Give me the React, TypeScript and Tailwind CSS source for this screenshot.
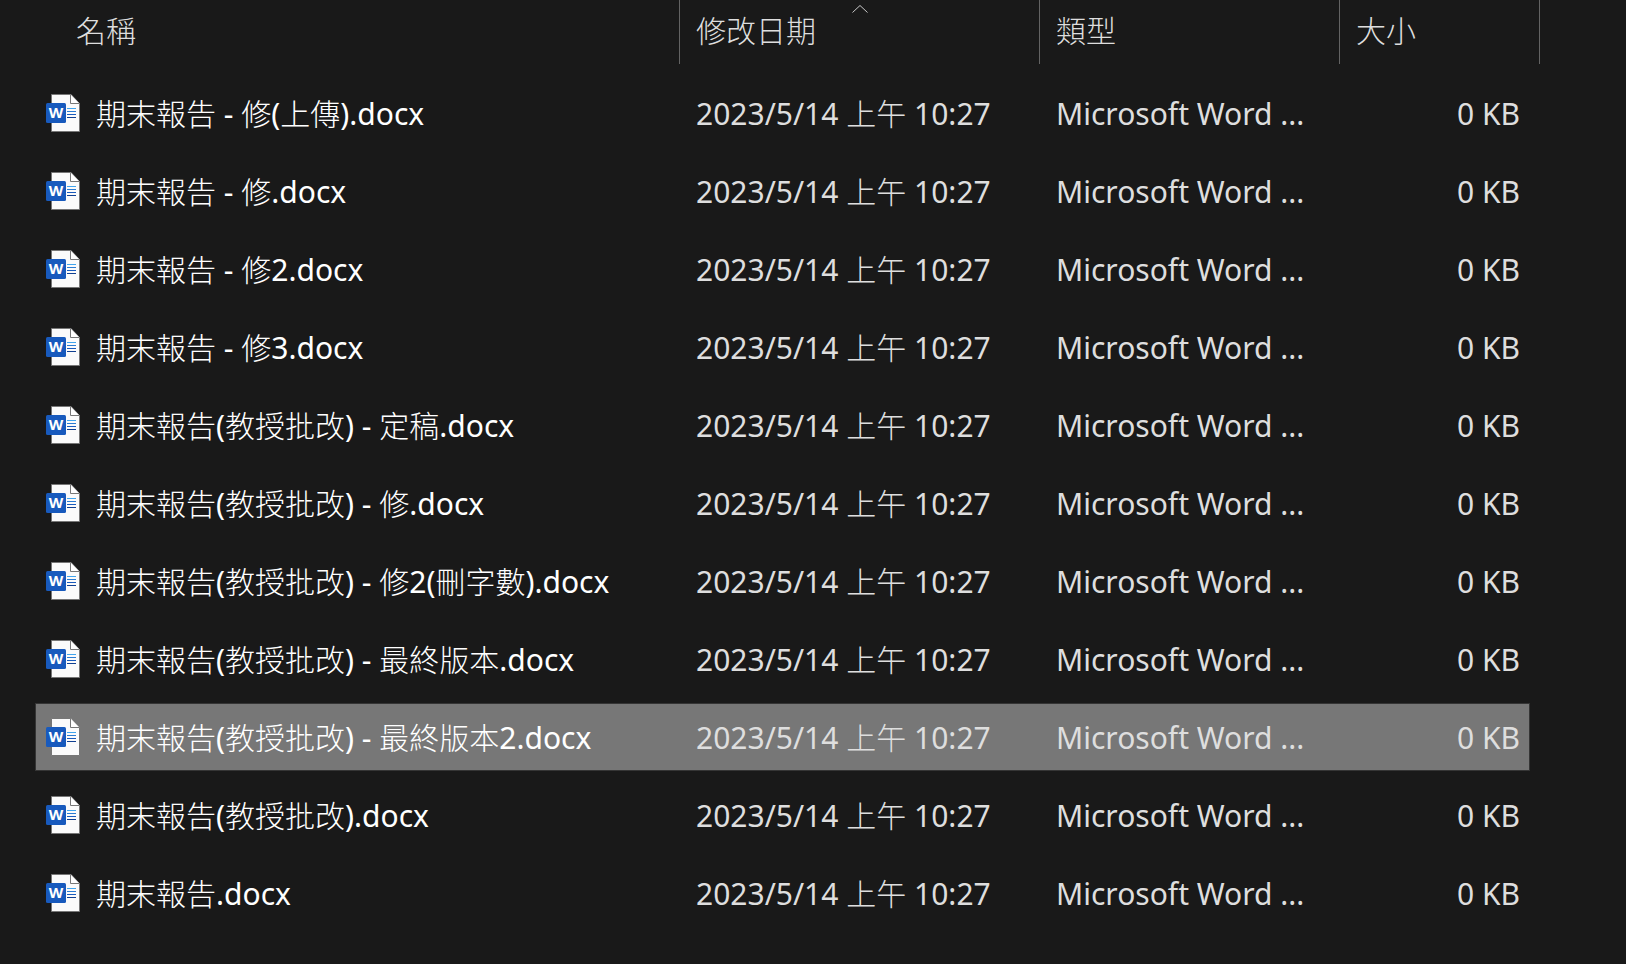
import { Fragment } from "react";

interface FileItem {
  name: string;
  modified: string;
  type: string;
  size: string;
  selected?: boolean;
}

const modified = "2023/5/14 上午 10:27";
const type = "Microsoft Word ...";
const size = "0 KB";

const files: FileItem[] = [
  { name: "期末報告 - 修(上傳).docx", modified, type, size },
  { name: "期末報告 - 修.docx", modified, type, size },
  { name: "期末報告 - 修2.docx", modified, type, size },
  { name: "期末報告 - 修3.docx", modified, type, size },
  { name: "期末報告(教授批改) - 定稿.docx", modified, type, size },
  { name: "期末報告(教授批改) - 修.docx", modified, type, size },
  { name: "期末報告(教授批改) - 修2(刪字數).docx", modified, type, size },
  { name: "期末報告(教授批改) - 最終版本.docx", modified, type, size },
  { name: "期末報告(教授批改) - 最終版本2.docx", modified, type, size, selected: true },
  { name: "期末報告(教授批改).docx", modified, type, size },
  { name: "期末報告.docx", modified, type, size },
];

const columns = [
  { key: "name", label: "名稱", sorted: false },
  { key: "modified", label: "修改日期", sorted: true },
  { key: "type", label: "類型", sorted: false },
  { key: "size", label: "大小", sorted: false },
];

// Chinese runs are set lighter than the Latin text around them
function MixedText({ children }: { children: string }) {
  return (
    <span className="whitespace-pre">
      {children.split(/([\u4e00-\u9fff]+)/).map((part, i) =>
        i % 2 === 1 ? (
          <span key={i} className="font-light">
            {part}
          </span>
        ) : (
          <Fragment key={i}>{part}</Fragment>
        )
      )}
    </span>
  );
}

function WordIcon() {
  return (
    <svg className="w-[34px] h-[38px] shrink-0" viewBox="0 0 34 38" aria-hidden="true">
      <path d="M5.5 .5H25L33.5 9.5V37.5H5.5Z" fill="#fbfbfb" stroke="#777777" />
      <path d="M24.5 .5V9.5H33.5" fill="#ffffff" stroke="#777777" />
      <path d="M21 14.5H30" stroke="#41a5ee" />
      <path d="M21 17.5H30" stroke="#2b7cd3" />
      <path d="M21 20.5H30" stroke="#185abd" />
      <path d="M21 23.5H30" stroke="#103f91" />
      <rect x="0" y="9" width="20" height="20" rx="1.5" fill="#185abd" />
      <text
        x="10"
        y="24"
        textAnchor="middle"
        fill="#ffffff"
        fontFamily="'Open Sans', 'Noto Sans', sans-serif"
        fontSize="15"
        fontWeight="700"
      >
        W
      </text>
    </svg>
  );
}

function SortArrow() {
  return (
    <svg
      className="absolute top-1 left-1/2 -translate-x-1/2 w-4 h-[10px]"
      viewBox="0 0 16 10"
      fill="none"
      stroke="#c8c8c8"
      aria-hidden="true"
    >
      <path d="M.5 8.5L8 1.5L15.5 8.5" />
    </svg>
  );
}

export default function App() {
  return (
    <main className="min-h-screen bg-[#191919] pl-9 pr-[86px] pb-9 font-['Noto_Sans','Noto_Sans_CJK_TC',sans-serif] text-[30px] leading-9 text-[#dedede]">
      <table className="block w-full">
        <thead className="block">
          <tr className="grid grid-cols-[minmax(0,1fr)_360px_300px_200px]">
            {columns.map((col) => (
              <th
                key={col.key}
                scope="col"
                aria-sort={col.sorted ? "ascending" : undefined}
                className="relative h-16 border-r border-[#636363] p-0 text-left font-normal"
              >
                <button
                  className={`flex h-full w-full items-center pb-0.5 text-left ${
                    col.key === "name" ? "pl-10" : "pl-4"
                  }`}
                >
                  <MixedText>{col.label}</MixedText>
                </button>
                {col.sorted && <SortArrow />}
              </th>
            ))}
          </tr>
        </thead>
        <tbody className="mt-4 mr-[11px] flex flex-col gap-3">
          {files.map((file) => (
            <tr
              key={file.name}
              aria-selected={file.selected}
              className={`grid h-[66px] grid-cols-[minmax(0,1fr)_360px_300px_189px] items-center ${
                file.selected ? "bg-[#777777] outline outline-[#353535]" : ""
              }`}
            >
              <td className="flex items-center gap-4 p-0 pl-[10px] text-white">
                <WordIcon />
                <div className="pt-0.5">
                  <MixedText>{file.name}</MixedText>
                </div>
              </td>
              <td className="p-0 pt-0.5 pl-4">
                <MixedText>{file.modified}</MixedText>
              </td>
              <td className="p-0 pt-0.5 pl-4">{file.type}</td>
              <td className="p-0 pt-0.5 pr-[9px] text-right">{file.size}</td>
            </tr>
          ))}
        </tbody>
      </table>
    </main>
  );
}
